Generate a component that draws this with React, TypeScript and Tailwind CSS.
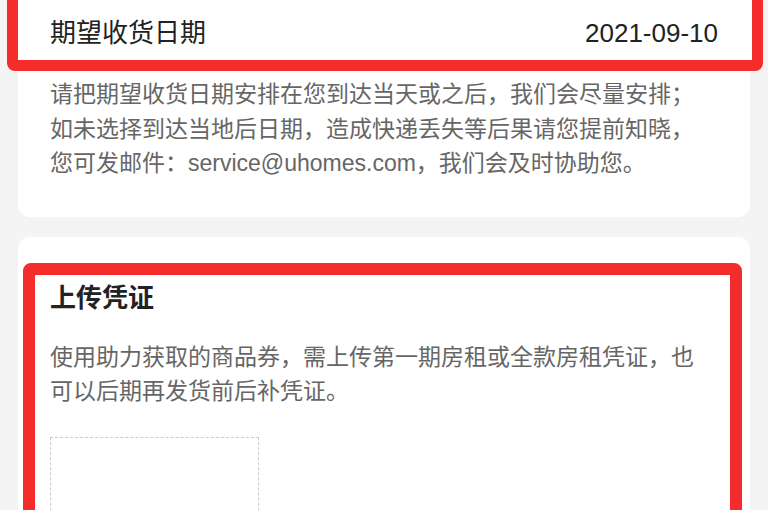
import React from 'react'

const FONT = { fontFamily: '"Liberation Sans", "Noto Sans CJK SC", sans-serif' }

function DateCard() {
  return (
    <div className="mx-[18px] rounded-xl bg-white pb-[36px] pt-[4px]">
      {/* highlighted row */}
      <div className="-ml-[11px] -mr-[13px] rounded-lg border-[11px] border-[#f42c2c] bg-white pt-[16px]">
        <div className="flex h-[53px] items-center justify-between pl-[32px] pr-[34px] text-[26px] text-[#222]">
          <span>期望收货日期</span>
          <span>2021-09-10</span>
        </div>
      </div>
      <p className="mt-[6px] pl-[32px] text-[23px] leading-[34.5px] text-[#666]">
        请把期望收货日期安排在您到达当天或之后，我们会尽量安排；
        <br />
        如未选择到达当地后日期，造成快递丢失等后果请您提前知晓，
        <br />
        您可发邮件：service@uhomes.com，我们会及时协助您。
      </p>
    </div>
  )
}

function UploadCard() {
  return (
    <div className="mx-[18px] mt-[20px] h-[400px] rounded-xl bg-white pt-[26px]">
      <div className="ml-[5px] mr-[8px] h-[400px] rounded-lg border-[12px] border-[#f42c2c] pl-[15px] pr-[20px] pt-[5px]">
        <h2 className="text-[26px] font-semibold leading-[36px] text-[#222]">上传凭证</h2>
        <p className="mt-[24px] text-[23px] leading-[34.5px] text-[#666]">
          使用助力获取的商品券，需上传第一期房租或全款房租凭证，也
          <br />
          可以后期再发货前后补凭证。
        </p>
        <div className="mt-[28px] h-[200px] w-[209px] border border-dashed border-[#cccccc]" />
      </div>
    </div>
  )
}

export default function App() {
  return (
    <div className="h-[510px] w-[768px] overflow-hidden bg-[#f4f4f4]" style={FONT}>
      <div className="-mt-[24px]">
        <DateCard />
        <UploadCard />
      </div>
    </div>
  )
}
